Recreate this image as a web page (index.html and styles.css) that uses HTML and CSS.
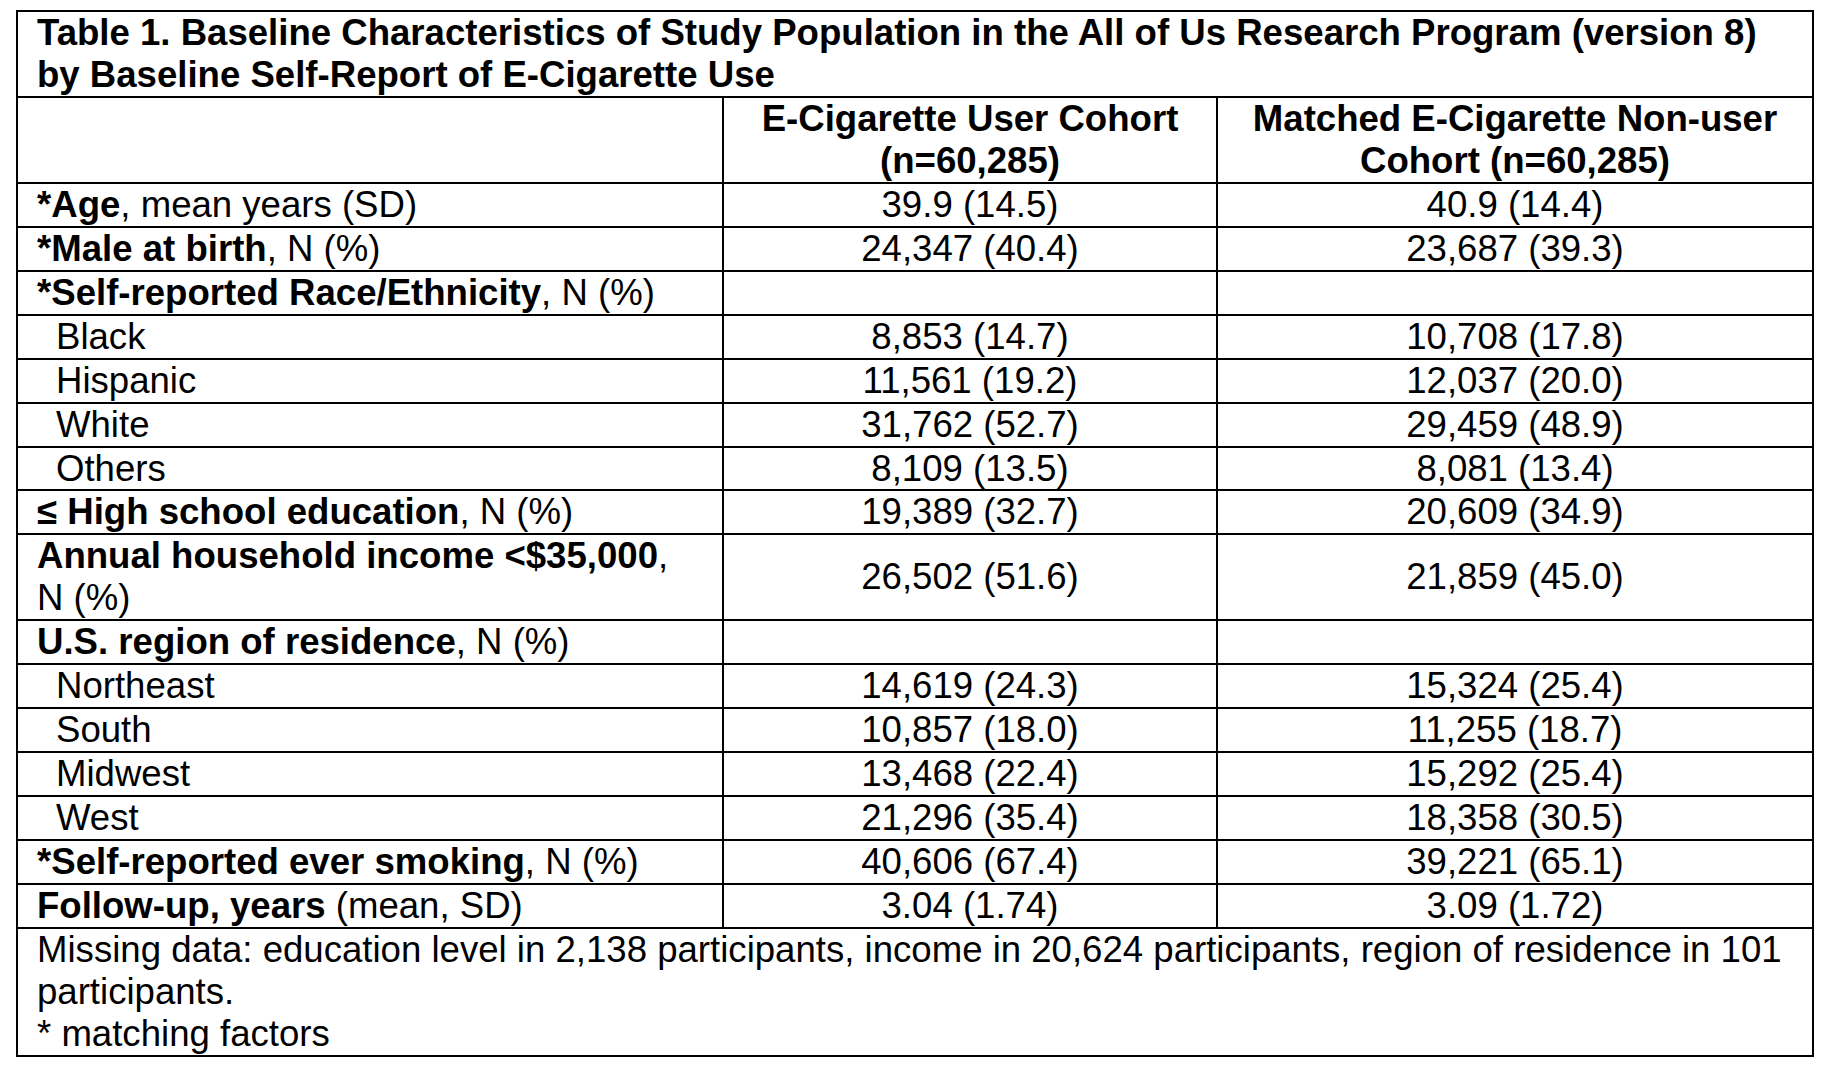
FILE: index.html
```html
<!DOCTYPE html>
<html lang="en">
<head>
<meta charset="utf-8">
<title>Table 1</title>
<link rel="stylesheet" href="styles.css">
</head>
<body>
<div class="page">
<table class="tbl">
  <colgroup>
    <col class="c1">
    <col class="c2">
    <col class="c3">
  </colgroup>
  <tr>
    <td class="title" colspan="3">Table 1. Baseline Characteristics of Study Population in the All of Us Research Program (version 8)<br>by Baseline Self-Report of E-Cigarette Use</td>
  </tr>
  <tr>
    <td></td>
    <td class="head">E-Cigarette User Cohort<br>(n=60,285)</td>
    <td class="head">Matched E-Cigarette Non-user<br>Cohort (n=60,285)</td>
  </tr>
  <tr><td class="lab"><b>*Age</b>, mean years (SD)</td><td class="val">39.9 (14.5)</td><td class="val">40.9 (14.4)</td></tr>
  <tr><td class="lab"><b>*Male at birth</b>, N (%)</td><td class="val">24,347 (40.4)</td><td class="val">23,687 (39.3)</td></tr>
  <tr><td class="lab"><b>*Self-reported Race/Ethnicity</b>, N (%)</td><td class="val"></td><td class="val"></td></tr>
  <tr><td class="lab sub">Black</td><td class="val">8,853 (14.7)</td><td class="val">10,708 (17.8)</td></tr>
  <tr><td class="lab sub">Hispanic</td><td class="val">11,561 (19.2)</td><td class="val">12,037 (20.0)</td></tr>
  <tr><td class="lab sub">White</td><td class="val">31,762 (52.7)</td><td class="val">29,459 (48.9)</td></tr>
  <tr><td class="lab sub">Others</td><td class="val">8,109 (13.5)</td><td class="val">8,081 (13.4)</td></tr>
  <tr><td class="lab"><b>≤ High school education</b>, N (%)</td><td class="val">19,389 (32.7)</td><td class="val">20,609 (34.9)</td></tr>
  <tr><td class="lab"><b>Annual household income &lt;$35,000</b>,<br>N (%)</td><td class="val">26,502 (51.6)</td><td class="val">21,859 (45.0)</td></tr>
  <tr><td class="lab"><b>U.S. region of residence</b>, N (%)</td><td class="val"></td><td class="val"></td></tr>
  <tr><td class="lab sub">Northeast</td><td class="val">14,619 (24.3)</td><td class="val">15,324 (25.4)</td></tr>
  <tr><td class="lab sub">South</td><td class="val">10,857 (18.0)</td><td class="val">11,255 (18.7)</td></tr>
  <tr><td class="lab sub">Midwest</td><td class="val">13,468 (22.4)</td><td class="val">15,292 (25.4)</td></tr>
  <tr><td class="lab sub">West</td><td class="val">21,296 (35.4)</td><td class="val">18,358 (30.5)</td></tr>
  <tr><td class="lab"><b>*Self-reported ever smoking</b>, N (%)</td><td class="val">40,606 (67.4)</td><td class="val">39,221 (65.1)</td></tr>
  <tr><td class="lab"><b>Follow-up, years</b> (mean, SD)</td><td class="val">3.04 (1.74)</td><td class="val">3.09 (1.72)</td></tr>
  <tr>
    <td class="foot" colspan="3">Missing data: education level in 2,138 participants, income in 20,624 participants, region of residence in 101<br>participants.<br>* matching factors</td>
  </tr>
</table>
</div>
</body>
</html>
```

FILE: styles.css
```css
html, body {
  margin: 0;
  padding: 0;
  background: #ffffff;
}

.page {
  padding: 10px 0 0 16px;
}

.tbl {
  border-collapse: collapse;
  table-layout: fixed;
  width: 1798px;
  font-family: "Liberation Sans", Arial, Helvetica, sans-serif;
  font-size: 36.6px;
  line-height: 41.95px;
  color: #000000;
}

.c1 { width: 706px; }
.c2 { width: 494px; }
.c3 { width: 596px; }

.tbl td {
  border: 2px solid #000000;
  padding: 0 6px 0 19px;
  vertical-align: middle;
  white-space: nowrap;
}

.title {
  font-weight: bold;
  text-align: left;
}

.tbl .head,
.tbl .val {
  text-align: center;
  padding: 0 4px;
}

.head {
  font-weight: bold;
}

.lab {
  text-align: left;
}

.tbl .sub {
  padding-left: 38px;
}

.foot {
  text-align: left;
}
```
